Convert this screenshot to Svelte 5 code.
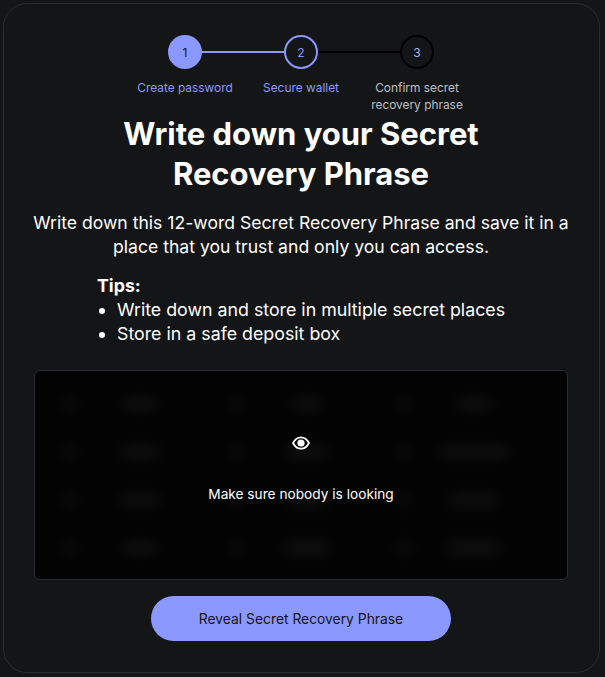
<script>
  const steps = [
    { n: 1, label: ['Create password'], state: 'done' },
    { n: 2, label: ['Secure wallet'], state: 'current' },
    { n: 3, label: ['Confirm secret', 'recovery phrase'], state: 'todo' }
  ];
  const hidden = [36, 30, 35, 38, 42, 70, 40, 38, 50, 36, 42, 50];
</script>

<main class="card">
  <ol class="steps">
    {#each steps as s, i}
      <li class="step {s.state}">
        {#if i < 2}<span class="line"></span>{/if}
        <span class="dot">{s.n}</span>
        <span class="label">{#each s.label as l}<span class="ln">{l}</span>{/each}</span>
      </li>
    {/each}
  </ol>

  <h1>Write down your Secret<br />Recovery Phrase</h1>
  <p class="lead">Write down this 12-word Secret Recovery Phrase and save it in a<br />place that you trust and only you can access.</p>

  <div class="tips">
    <strong>Tips:</strong>
    <ul>
      <li>Write down and store in multiple secret places</li>
      <li>Store in a safe deposit box</li>
    </ul>
  </div>

  <section class="box">
    <div class="grid">
      {#each hidden as w}
        <div class="cell"><span class="num"></span><span class="slot"><span class="word" style="width: {w}px"></span></span></div>
      {/each}
    </div>
    <div class="overlay">
      <svg class="eye" width="18" height="14" viewBox="0 0 18 14" aria-hidden="true">
        <path d="M1 7C3 3.2 5.8 1.3 9 1.3S15 3.2 17 7c-2 3.800-4.800 5.700-8 5.700S3 10.800 1 7Z" fill="none" stroke="#fff" stroke-width="1.800"/>
        <circle cx="9" cy="7" r="3.600" fill="#fff"/>
      </svg>
      <p>Make sure nobody is looking</p>
    </div>
  </section>

  <button class="reveal">Reveal Secret Recovery Phrase</button>
</main>

<style>
  :global(body) {
    margin: 0;
    background: #141517;
    font-family: Inter, "Open Sans", sans-serif;
    color: #fff;
  }
  .card {
    box-sizing: border-box;
    width: 597px;
    height: 670px;
    margin: 3px 0 0 3px;
    padding: 31px 31px 0 30px;
    border: 1px solid #2a2c2f;
    border-radius: 24px;
    background: #141517;
    display: flex;
    flex-direction: column;
    align-items: center;
  }
  .steps {
    list-style: none;
    display: flex;
    margin: 0;
    padding: 0;
    width: 348px;
    align-self: center;
    height: 79px;
  }
  .step {
    position: relative;
    width: 116px;
    display: flex;
    flex-direction: column;
    align-items: center;
  }
  .dot {
    position: relative;
    box-sizing: border-box;
    width: 34px;
    height: 34px;
    border-radius: 50%;
    border: 2px solid #000;
    display: flex;
    align-items: center;
    justify-content: center;
    font-size: 12px;
    color: #a9b4f0;
    background: #141517;
  }
  .done .dot { background: #8b99ff; border-color: #8b99ff; color: #141517; }
  .current .dot { border-color: #8b99ff; color: #8b99ff; }
  .line {
    position: absolute;
    top: 16px;
    left: 50%;
    width: 100%;
    height: 2px;
    background: #000;
  }
  .done .line { background: #8b99ff; }
  .label {
    margin-top: 10px;
    font-size: 11.9px;
    line-height: 17px;
    display: flex;
    flex-direction: column;
    align-items: center;
    white-space: nowrap;
    color: #8b99ff;
  }
  .todo .label { color: #bbc0c5; }
  h1 {
    margin: 0;
    font-size: 31px;
    line-height: 40px;
    font-weight: 700;
    text-align: center;
    white-space: nowrap;
  }
  .lead {
    margin: 17px 0 0;
    font-size: 17.6px;
    line-height: 24px;
    text-align: center;
    white-space: nowrap;
  }
  .tips {
    align-self: flex-start;
    margin: 15px 0 0 63px;
    font-size: 17.8px;
    line-height: 24px;
  }
  .tips ul { margin: 0; padding: 0 0 0 20px; }
  .box {
    position: relative;
    box-sizing: border-box;
    align-self: stretch;
    height: 210px;
    margin-top: 24px;
    border: 1px solid #2a2c2f;
    border-radius: 6px;
    background: #030303;
    overflow: hidden;
  }
  .grid {
    display: grid;
    grid-template-columns: repeat(3, 167px);
    grid-auto-rows: 48px;
    padding: 9px 6px;
    filter: blur(7px);
    opacity: 0.06;
  }
  .cell {
    display: flex;
    align-items: center;
    padding-left: 23px;
  }
  .num {
    width: 12px;
    height: 12px;
    background: #fff;
  }
  .slot {
    flex: 1;
    display: flex;
    justify-content: center;
    padding-right: 4px;
  }
  .word {
    height: 12px;
    background: #fff;
  }
  .overlay {
    position: absolute;
    inset: 0;
    display: flex;
    flex-direction: column;
    align-items: center;
    padding-top: 65px;
  }
  .eye { display: block; }
  .overlay p { margin: 34px 0 0; font-size: 13.7px; line-height: 20px; }
  .reveal {
    width: 300px;
    height: 45px;
    margin-top: 16px;
    border: none;
    border-radius: 23px;
    background: #8b99ff;
    color: #141517;
    font: 400 13.85px Inter, "Open Sans", sans-serif;
  }
</style>
